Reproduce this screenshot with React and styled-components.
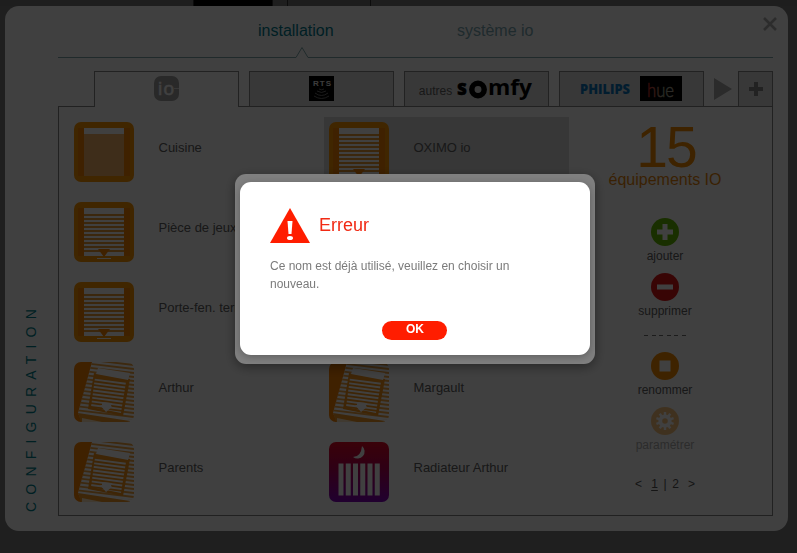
import React from "react";
import styled, { createGlobalStyle } from "styled-components";

const GlobalStyle = createGlobalStyle`
  * { box-sizing: border-box; }
  body { margin: 0; background: #7c7c7c; font-family: "Liberation Sans", Arial, sans-serif; overflow: hidden; }
  svg { display: block; flex: none; overflow: visible; }
`;

const Page = styled.div`
  width: 797px;
  height: 553px;
`;
const TopStrip = styled.div`
  display: flex;
  height: 6px;
  padding-left: 193px;
  gap: 14px;
  background: #787878;
`;
const StripTab = styled.div`
  width: ${(p) => (p.$dark ? 80 : 84)}px;
  background: ${(p) => (p.$dark ? "#000" : "#747474")};
  border: solid #303030;
  border-width: 0 1px;
`;
const Window = styled.main`
  display: flex;
  width: 783px;
  height: 525px;
  margin-left: 5px;
  background: #fff;
  border-radius: 14px;
`;
const SideTitle = styled.div`
  width: 53px;
  padding: 0 0 19px 18px;
  display: flex;
  align-items: flex-end;
  span {
    writing-mode: vertical-rl;
    transform: rotate(180deg);
    font-size: 14px;
    line-height: 16px;
    letter-spacing: 7.2px;
    color: #007f8c;
    white-space: nowrap;
  }
`;
const Content = styled.div`
  width: 715px;
`;
const Header = styled.header`
  display: flex;
  align-items: flex-start;
  height: 40px;
  padding: 15px 0 0 200px;
`;
const NavItem = styled.a`
  width: 199px;
  font-size: 16px;
  line-height: 20px;
  color: ${(p) => (p.$active ? "#007c90" : "#7da9b4")};
`;
const Close = styled.button`
  margin: -6px -12px 0 auto;
  padding: 0;
  border: 0;
  background: none;
`;
const Tabs = styled.div`
  display: flex;
  align-items: flex-start;
  height: 36px;
  margin: 13px 0 -1px;
  padding-left: 36px;
`;
const Tab = styled.div`
  display: flex;
  align-items: flex-start;
  justify-content: center;
  width: ${(p) => p.$width || 145}px;
  height: ${(p) => (p.$active ? 36 : 35)}px;
  margin-right: ${(p) => (p.$width ? 0 : 10)}px;
  padding-top: 4px;
  border: 1px solid #898989;
  border-bottom: 0;
  background: ${(p) => (p.$active ? "#fff" : "#dedede")};
`;
const TabLabel = styled.span`
  margin: 7px 5px 0 -1px;
  font-size: 12px;
  line-height: 16px;
  color: #606060;
`;
const Next = styled.div`
  width: 24px;
  padding-top: 6px;
`;
const Body = styled.section`
  display: flex;
  width: 715px;
  height: 410px;
  border: 1px solid #858585;
`;
const Devices = styled.div`
  display: grid;
  grid-template-columns: 245px 245px;
  grid-auto-rows: 70px;
  gap: 10px;
  padding: 10px 0 0 10px;
`;
const Device = styled.div`
  display: flex;
  align-items: flex-start;
  gap: 24.5px;
  padding: 5px;
  background: ${(p) => (p.$selected ? "#dcdcdc" : "transparent")};
  span { font-size: 13px; line-height: 16px; margin-top: 18px; color: #606060; white-space: nowrap; }
`;
const Actions = styled.aside`
  display: flex;
  flex-direction: column;
  align-items: center;
  flex: none;
  width: 192px;
`;
const Count = styled.div`
  margin-top: 9px;
  height: 55px;
  line-height: 62px;
  font-size: 57px;
  letter-spacing: -2px;
  text-indent: 2px;
  color: #f58d00;
`;
const CountLabel = styled.div`
  height: 21px;
  line-height: 17px;
  font-size: 16px;
  color: #e8850c;
`;
const Action = styled.div`
  display: flex;
  flex-direction: column;
  align-items: center;
  height: 55px;
  opacity: ${(p) => (p.$disabled ? 0.5 : 1)};
  span { margin-top: 3px; font-size: 12px; line-height: 14px; color: #606060; }
`;
const ActionGroup = styled.div`
  width: 100px;
  margin-top: ${(p) => p.$top}px;
`;
const Dashes = styled.div`
  width: 42px;
  height: 1px;
  margin-top: 7px;
  background: repeating-linear-gradient(90deg, #707070 0 4px, transparent 4px 7.5px);
`;
const Pager = styled.div`
  display: flex;
  align-items: center;
  height: 14px;
  margin-top: 15px;
  font-size: 12px;
  color: #555;
  span { width: 7px; text-align: center; }
  span:nth-child(2) { margin-left: 9px; text-decoration: underline; text-underline-offset: 2px; }
  span:nth-child(3) { width: 14px; }
  span:nth-child(4) { margin-right: 9px; }
`;
const Overlay = styled.div`
  position: fixed;
  inset: 0;
  background: rgba(0, 0, 0, 0.75);
`;
const Dialog = styled.div`
  position: absolute;
  left: 235px;
  top: 174px;
  width: 360px;
  height: 190px;
  padding: 8px 5px 9px;
  border-radius: 11px;
  background: #808080;
  box-shadow: 0 3px 12px rgba(0, 0, 0, 0.4);
`;
const DialogCard = styled.div`
  display: flex;
  flex-direction: column;
  height: 173px;
  padding: 26px 30px 0;
  border-radius: 11px;
  background: #fff;
  box-shadow: 0 2px 9px rgba(0, 0, 0, 0.28);
`;
const DialogTitle = styled.div`
  display: flex;
  gap: 9px;
  font-size: 18px;
  line-height: 34px;
  color: #f12a14;
`;
const Message = styled.p`
  margin: 14px 0 0;
  font-size: 12px;
  line-height: 18px;
  color: #7b7b7b;
`;
const OkButton = styled.button`
  width: 65px;
  height: 19px;
  margin: 28px 0 0 112px;
  padding: 0 0 2px 1px;
  border: 0;
  border-radius: 10px;
  background: #ff1d00;
  color: #fff;
  font: bold 12px/17px "Liberation Sans", Arial, sans-serif;
`;

const NavRule = () => (
  <svg width="715" height="12">
    <path d="M0 11.5H238L244 1.5L250 11.5H715" fill="none" stroke="#80a9ad" />
  </svg>
);

const IoLogo = () => (
  <svg width="25" height="25">
    <rect width="25" height="25" rx="7" fill="#a4a4a4" />
    <text x="4" y="19" fontFamily="Liberation Sans" fontSize="19" fill="#fff" textLength="16" stroke="#fff" strokeWidth=".4">io</text>
    <path d="M20 12.500h5" stroke="#fff" strokeWidth=".6" />
  </svg>
);
const RtsLogo = () => (
  <svg width="25" height="25">
    <rect width="25" height="25" />
    <text x="4" y="9.500" fontFamily="Liberation Sans" fontWeight="bold" fontSize="8" fill="#eee" textLength="18">RTS</text>
    <g fill="none" stroke="#888" strokeWidth=".8">
      <path d="M10 13q2.500 1.500 5 0M8 15q4.500 3 9 0M6 17q6.500 5 13 0M5 20q7.500 5 15 0" />
    </g>
  </svg>
);
const SomfyLogo = () => (
  <svg width="76" height="28">
    <g fontFamily="Open Sans" fontWeight="800">
      <text x="0" y="19" fontSize="21" textLength="10" lengthAdjust="spacingAndGlyphs" stroke="#000" strokeWidth=".4">s</text>
      <text x="31" y="19" fontSize="21" textLength="44" lengthAdjust="spacingAndGlyphs" fontWeight="700">mfy</text>
    </g>
    <circle cx="21" cy="13.500" r="6.200" fill="none" stroke="#000" strokeWidth="5.500" />
  </svg>
);
const PhilipsHueLogo = () => (
  <svg width="103" height="25">
    <defs>
      <linearGradient id="hue">
        <stop stopColor="#c42020" />
        <stop offset=".3" stopColor="#c46455" />
        <stop offset=".6" stopColor="#93a68b" />
        <stop offset="1" stopColor="#b5aaa0" />
      </linearGradient>
    </defs>
    <text x="0" y="18" fontFamily="Open Sans" fontWeight="800" fontSize="13.500" fill="#0875bd" textLength="50" lengthAdjust="spacingAndGlyphs">PHILIPS</text>
    <rect x="60" width="42" height="25" />
    <text x="67" y="21" fontFamily="Lato" fontWeight="300" fontSize="20" fill="url(#hue)" stroke="url(#hue)" strokeWidth=".5" textLength="27" lengthAdjust="spacingAndGlyphs">hue</text>
  </svg>
);

const slats = (n) => Array.from({ length: n }, (_, i) => i);

const BlindIcon = () => (
  <svg width="60" height="60">
    <rect width="60" height="60" rx="7" fill="#ff9600" />
    <path d="M4 6h6v48h-6zM50 6h6v48h-6z" fill="#fa8400" />
    <rect x="10" y="6" width="40" height="6" fill="#fff" />
    <rect x="10" y="12" width="40" height="42" fill="#f6b269" />
  </svg>
);
const ShutterIcon = () => (
  <svg width="60" height="60">
    <rect width="60" height="60" rx="7" fill="#ff9600" />
    <path d="M4 6h6v48h-6zM50 6h6v48h-6z" fill="#fa8400" />
    <rect x="10" y="6" width="40" height="48" fill="#fff" />
    {slats(10)
      .map((i) => <rect key={i} x="10" y={12 + i * 4} width="40" height="2" fill="#eb9a35" />)}
    <path d="M24 47h12l-6 8z" fill="#fa8400" />
    <path d="M23 56.500h14" stroke="#fff" />
  </svg>
);
const SkylightIcon = () => (
  <svg width="60" height="60">
    <defs>
      <clipPath id="sky-round"><rect width="60" height="60" rx="7" /></clipPath>
      <clipPath id="sky-roof"><path d="M18 0H60V58L4 50Z" /></clipPath>
      <clipPath id="sky-pane"><path d="M21 15L52 20L47 51L17 45Z" /></clipPath>
    </defs>
    <g clipPath="url(#sky-round)">
      <rect width="60" height="60" fill="#fff" />
      <path d="M0 0H18L4 51L8 60H0Z" fill="#fa8200" />
      <g clipPath="url(#sky-roof)" stroke="#f3a33f" strokeWidth="1.800">
        {slats(18).map((i) => <path key={i} d={`M0 ${-8 + i * 4}l60 7`} />)}
      </g>
      <path d="M4 51L56 59V60H7Z" fill="#f39825" />
      <path d="M8 56l20 4H8Z" fill="#ffe5c2" />
      <path d="M20 11L56 17L49 54L14 47Z" fill="#f59318" />
      <path d="M24 6L56 11L54 18L22 12Z" fill="#fff" />
      <g clipPath="url(#sky-pane)" stroke="#fff" strokeWidth="1.900">
        {slats(9).map((i) => <path key={i} d={`M12 ${16.5 + i * 3.7}l46 6`} />)}
      </g>
      <path d="M28 40l10 1-1 3 1 1-6 5-6-7 2 0z" fill="#fff" />
    </g>
  </svg>
);
const RadiatorIcon = () => (
  <svg width="60" height="60">
    <defs>
      <linearGradient id="heat" x2="0" y2="1">
        <stop stopColor="#e50925" />
        <stop offset=".45" stopColor="#b70055" />
        <stop offset="1" stopColor="#8100bd" />
      </linearGradient>
    </defs>
    <rect width="60" height="60" rx="7" fill="url(#heat)" />
    <path d="M33 4A7 7 0 1 1 24 15Q32 15 33 4Z" fill="#fff" />
    {slats(6)
      .map((i) => <rect key={i} x={9.5 + i * 7.25} y="21.500" width="5" height="32" fill="#fff" />)}
  </svg>
);
const deviceIcons = { blind: BlindIcon, shutter: ShutterIcon, skylight: SkylightIcon, radiator: RadiatorIcon };

const devices = [
  ["Cuisine", "blind"], ["OXIMO io", "shutter", true],
  ["Pièce de jeux", "shutter"], ["Salon", "shutter"],
  ["Porte-fen. terrasse", "shutter"], ["Bureau", "shutter"],
  ["Arthur", "skylight"], ["Margault", "skylight"],
  ["Parents", "skylight"], ["Radiateur Arthur", "radiator"],
];

const ActionIcon = ({ kind }) => {
  const color = { add: "#65ba00", remove: "#df1616" }[kind] || "#f58b00";
  return (
    <svg width="28" height="28">
      <circle cx="14" cy="14" r="14" fill={color} />
      {kind === "add" && <path d="M6 14h16M14 6v16" stroke="#fff" strokeWidth="5" />}
      {kind === "remove" && <path d="M6 14h16" stroke="#fff" strokeWidth="5" />}
      {kind === "rename" && <rect x="8.500" y="8.500" width="11" height="11" fill="#fff" />}
      {kind === "configure" && (
        <g stroke="#fff">
          <circle cx="14" cy="14" r="4.700" fill="none" strokeWidth="3.800" />
          {slats(10)
            .map((i) => <path key={i} d="M14 8.500V5" strokeWidth="2.400" transform={`rotate(${i * 36} 14 14)`} />)}
        </g>
      )}
    </svg>
  );
};

export default function App() {
  return (
    <Page>
      <GlobalStyle />
      <TopStrip><StripTab $dark /><StripTab /></TopStrip>
      <Window>
        <SideTitle><span>CONFIGURATION</span></SideTitle>
        <Content>
          <Header>
            <NavItem $active>installation</NavItem>
            <NavItem>système io</NavItem>
            <Close aria-label="Fermer">
              <svg width="30" height="18"><path d="M9 3l12 12M21 3L9 15" stroke="#b0b0b0" strokeWidth="2.600" /></svg>
            </Close>
          </Header>
          <NavRule />
          <Tabs>
            <Tab $active><IoLogo /></Tab>
            <Tab><RtsLogo /></Tab>
            <Tab><TabLabel>autres</TabLabel><SomfyLogo /></Tab>
            <Tab><PhilipsHueLogo /></Tab>
            <Next><svg width="18" height="24"><path d="M0 1L18 12L0 23Z" fill="#aaa" /></svg></Next>
            <Tab $width={35}>
              <svg width="16" height="26"><path d="M1 13h14M8 6v14" stroke="#888" strokeWidth="4" /></svg>
            </Tab>
          </Tabs>
          <Body>
            <Devices>
              {devices.map(([name, kind, selected]) => {
                const Icon = deviceIcons[kind];
                return <Device key={name} $selected={selected}><Icon /><span>{name}</span></Device>;
              })}
            </Devices>
            <Actions>
              <Count>15</Count>
              <CountLabel>équipements IO</CountLabel>
              <ActionGroup $top={26}>
                <Action><ActionIcon kind="add" /><span>ajouter</span></Action>
                <Action><ActionIcon kind="remove" /><span>supprimer</span></Action>
              </ActionGroup>
              <Dashes />
              <ActionGroup $top={16}>
                <Action><ActionIcon kind="rename" /><span>renommer</span></Action>
                <Action $disabled><ActionIcon kind="configure" /><span>paramétrer</span></Action>
              </ActionGroup>
              <Pager><span>&lt;</span><span>1</span><span>|</span><span>2</span><span>&gt;</span></Pager>
            </Actions>
          </Body>
        </Content>
      </Window>
      <Overlay>
        <Dialog role="alertdialog">
          <DialogCard>
            <DialogTitle>
              <svg width="40" height="35">
                <path d="M20 0L40 35H0Z" fill="#ff1d00" />
                <path d="M17.500 13h5l-1 13h-3z" fill="#fff" />
                <ellipse cx="20" cy="30" rx="3" ry="2" fill="#fff" />
              </svg>
              Erreur
            </DialogTitle>
            <Message>Ce nom est déjà utilisé, veuillez en choisir un nouveau.</Message>
            <OkButton>OK</OkButton>
          </DialogCard>
        </Dialog>
      </Overlay>
    </Page>
  );
}
